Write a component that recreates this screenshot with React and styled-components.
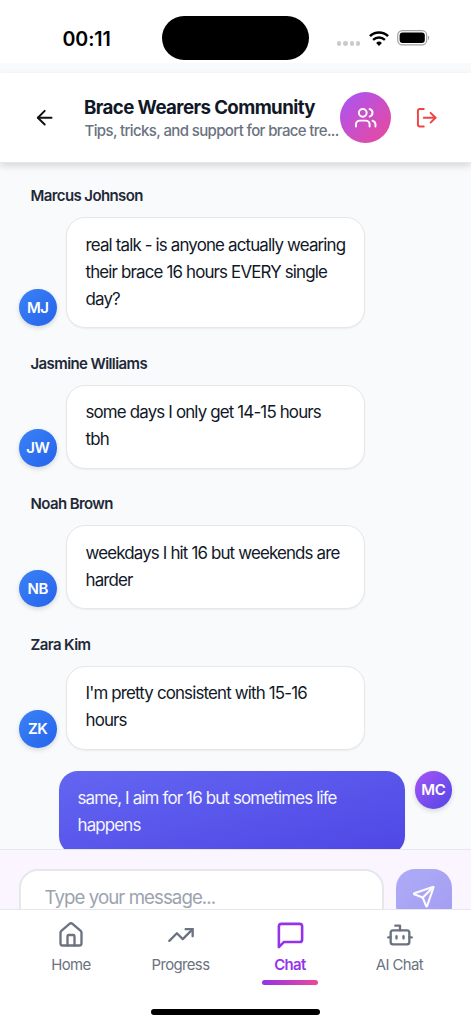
import React from "react";
import styled, { createGlobalStyle } from "styled-components";
import {
  ArrowLeft,
  Bot,
  House,
  LogOut,
  Send,
  TrendingUp,
  Users,
} from "lucide-react";

const messages = [
  {
    id: 1,
    name: "Marcus Johnson",
    initials: "MJ",
    text: "real talk - is anyone actually wearing their brace 16 hours EVERY single day?",
  },
  {
    id: 2,
    name: "Jasmine Williams",
    initials: "JW",
    text: "some days I only get 14-15 hours tbh",
  },
  {
    id: 3,
    name: "Noah Brown",
    initials: "NB",
    text: "weekdays I hit 16 but weekends are harder",
  },
  {
    id: 4,
    name: "Zara Kim",
    initials: "ZK",
    text: "I'm pretty consistent with 15-16 hours",
  },
  {
    id: 5,
    own: true,
    initials: "MC",
    text: "same, I aim for 16 but sometimes life happens",
  },
];

function ChatIcon() {
  return (
    <svg
      width="31"
      height="31"
      viewBox="0 0 24 24"
      fill="none"
      stroke="currentColor"
      strokeWidth="2"
      strokeLinecap="round"
      strokeLinejoin="round"
    >
      <path d="M21 15a2 2 0 0 1-2 2H7l-4 4V5a2 2 0 0 1 2-2h14a2 2 0 0 1 2 2z" />
    </svg>
  );
}

const tabs = [
  { label: "Home", icon: <House size={28} /> },
  { label: "Progress", icon: <TrendingUp size={28} /> },
  { label: "Chat", icon: <ChatIcon />, active: true },
  { label: "AI Chat", icon: <Bot size={28} /> },
];

function PhoneStatus() {
  return (
    <StatusBar>
      <Clock>00:11</Clock>
      <Island />
      <StatusIcons>
        <Dots>
          <Dot />
          <Dot />
          <Dot />
          <Dot />
        </Dots>
        <svg width="20" height="15" viewBox="0 0 20 15" fill="none" stroke="#000">
          <path d="M1 5.1a13 13 0 0 1 18 0" strokeWidth="2.7" />
          <path d="M4.1 8.9a8.5 8.5 0 0 1 11.8 0" strokeWidth="2.4" />
          <path d="M10 14.9 7.1 11.9a4.3 4.3 0 0 1 5.8 0z" fill="#000" stroke="none" />
        </svg>
        <svg width="33" height="16" viewBox="0 0 33 16">
          <rect x="0.7" y="0.7" width="29" height="14.2" rx="4.6" fill="none" stroke="#a3a3a3" strokeWidth="1.2" />
          <rect x="2.6" y="2.6" width="25.2" height="10.4" rx="3" fill="#000" />
          <path d="M31 5.7c1.5.5 1.5 3.7 0 4.2z" fill="#a3a3a3" />
        </svg>
      </StatusIcons>
    </StatusBar>
  );
}

function Message({ message }) {
  const { name, initials, text, own } = message;

  return (
    <Group $own={own}>
      {name && <Name>{name}</Name>}
      <Row $own={own}>
        <Avatar $own={own}>{initials}</Avatar>
        <Bubble $own={own}>{text}</Bubble>
      </Row>
    </Group>
  );
}

function App() {
  return (
    <Screen>
      <GlobalStyle />
      <PhoneStatus />
      <Header>
        <IconButton aria-label="Back">
          <ArrowLeft size={23.4} />
        </IconButton>
        <Titles>
          <Title>Brace Wearers Community</Title>
          <Subtitle>Tips, tricks, and support for brace tre...</Subtitle>
        </Titles>
        <MembersButton aria-label="Members">
          <Users size={23.4} />
        </MembersButton>
        <LeaveButton aria-label="Leave">
          <LogOut size={23.4} />
        </LeaveButton>
      </Header>
      <Feed>
        {messages.map((message) => (
          <Message key={message.id} message={message} />
        ))}
      </Feed>
      <Composer>
        <Input placeholder="Type your message..." />
        <SendButton aria-label="Send">
          <Send size={23.4} />
        </SendButton>
      </Composer>
      <Nav>
        <Tabs>
          {tabs.map((tab) => (
            <Tab key={tab.label} $active={tab.active}>
              <TabIcon>{tab.icon}</TabIcon>
              <TabLabel>{tab.label}</TabLabel>
              {tab.active && <Underline />}
            </Tab>
          ))}
        </Tabs>
        <HomeIndicator />
      </Nav>
    </Screen>
  );
}

const GlobalStyle = createGlobalStyle`
  * {
    box-sizing: border-box;
  }
  body {
    background: #f9fafb;
    font-family: Inter, "Liberation Sans", sans-serif;
    margin: 0;
  }
  button {
    background: none;
    border: none;
    font: inherit;
    padding: 0;
  }
`;

const Screen = styled.div`
  background: #f9fafc;
  display: flex;
  flex-direction: column;
  height: 1024px;
  overflow: hidden;
  width: 471px;
`;

const StatusBar = styled.div`
  background: white;
  display: grid;
  flex: none;
  grid-template-columns: 162px 147px 1fr;
  height: 63px;
  padding-top: 16px;
`;

const Clock = styled.div`
  font-size: 19.6px;
  font-weight: 600;
  letter-spacing: -0.1px;
  line-height: 46px;
  padding-left: 62.5px;
`;

const Island = styled.div`
  background: black;
  border-radius: 22px;
  height: 44px;
`;

const StatusIcons = styled.div`
  align-items: center;
  display: flex;
  gap: 8px;
  height: 44px;
  padding-left: 28px;
`;

const Dots = styled.div`
  display: flex;
  gap: 2px;
  margin: 11px 1px 0 0;
`;

const Dot = styled.span`
  background: #cacaca;
  border-radius: 50%;
  height: 4.3px;
  width: 4.3px;
`;

const Header = styled.header`
  align-items: center;
  background: white;
  border-bottom: 1px solid #e5e7eb;
  box-shadow: 0 3px 7px rgba(0, 0, 0, 0.14);
  display: flex;
  flex: none;
  height: 90px;
  margin-top: 10px;
  padding: 0 19px;
  z-index: 1;
`;

const IconButton = styled.button`
  color: #111;
  display: grid;
  flex: none;
  height: 51px;
  place-items: center;
  width: 51px;
`;

const Titles = styled.div`
  flex: none;
  margin-left: 14px;
  padding-top: 2px;
  width: 255.5px;
`;

const Title = styled.h1`
  color: #111827;
  font-size: 18.7px;
  font-weight: 700;
  letter-spacing: -0.6px;
  line-height: 24px;
  margin: 0;
`;

const Subtitle = styled.p`
  color: #6b7280;
  font-size: 15px;
  font-weight: 500;
  letter-spacing: -0.63px;
  line-height: 22px;
  margin: 0;
  padding-left: 0.5px;
  white-space: nowrap;
`;

const MembersButton = styled(IconButton)`
  background: linear-gradient(135deg, #a855f7, #ec4899);
  border-radius: 50%;
  color: white;
  height: 51.5px;
  width: 51.5px;
`;

const LeaveButton = styled(IconButton)`
  color: #ef4444;
  margin-left: 10px;
`;

const Feed = styled.main`
  display: flex;
  flex: 1;
  flex-direction: column;
  gap: 22.5px;
  min-height: 0;
  overflow: hidden;
  padding: 20px 19px 0;
`;

const Group = styled.section`
  flex: none;
  margin-top: ${({ $own }) => ($own ? "-1px" : 0)};
`;

const Name = styled.div`
  color: #1f2937;
  font-size: 15px;
  font-weight: 600;
  letter-spacing: -0.6px;
  line-height: 26px;
  margin-bottom: 8px;
  padding-left: 11.5px;
`;

const Row = styled.div`
  align-items: ${({ $own }) => ($own ? "flex-start" : "flex-end")};
  display: flex;
  flex-direction: ${({ $own }) => ($own ? "row-reverse" : "row")};
  gap: 9.5px;
`;

const Avatar = styled.div`
  background: ${({ $own }) =>
    $own
      ? "linear-gradient(135deg, #a855f7, #4f46e5)"
      : "linear-gradient(135deg, #3b82f6, #2563eb)"};
  border-radius: 50%;
  box-shadow: 0 2px 5px rgba(0, 0, 0, 0.15);
  color: white;
  flex: none;
  font-size: 15px;
  font-weight: 600;
  height: 37.5px;
  letter-spacing: -0.5px;
  line-height: 37.5px;
  margin-bottom: ${({ $own }) => ($own ? 0 : "2px")};
  text-align: center;
  width: 37.5px;
`;

const Bubble = styled.div`
  background: ${({ $own }) =>
    $own ? "linear-gradient(to bottom right, #6366f1, #4f46e5)" : "white"};
  border: ${({ $own }) => ($own ? "none" : "1px solid #e5e7eb")};
  border-radius: 19px;
  box-shadow: 0 1px 2px rgba(0, 0, 0, 0.06);
  color: ${({ $own }) => ($own ? "#f5f5ff" : "#111827")};
  font-size: 16.9px;
  letter-spacing: -0.84px;
  line-height: 27px;
  padding: ${({ $own }) => ($own ? "13.5px 18px 16.5px 18.5px" : "13.5px 17px 14.5px 18.5px")};
  width: ${({ $own }) => ($own ? "346px" : "299px")};
`;

const Composer = styled.div`
  background: #faf5ff;
  border-top: 1px solid #e5e7eb;
  display: flex;
  flex: none;
  gap: 12px;
  height: 60px;
  overflow: hidden;
  padding: 19px 19px 0;
`;

const Input = styled.input`
  background: white;
  border: 2.4px solid #e5e7eb;
  border-radius: 19px;
  flex: 1;
  font-family: inherit;
  font-size: 18.7px;
  height: 57px;
  letter-spacing: -0.95px;
  min-width: 0;
  padding: 0 23.5px;
  &::placeholder {
    color: #9ca3af;
  }
`;

const SendButton = styled.button`
  background: linear-gradient(135deg, #6366f1, #4f46e5);
  border-radius: 19px;
  color: white;
  display: grid;
  flex: none;
  height: 56px;
  opacity: 0.5;
  place-items: center;
  width: 56px;
  svg {
    stroke-width: 2.2;
  }
`;

const Nav = styled.nav`
  align-items: center;
  background: white;
  border-top: 1px solid #e5e7eb;
  display: flex;
  flex: none;
  flex-direction: column;
  height: 115px;
  justify-content: space-between;
  padding-bottom: 9.5px;
`;

const Tabs = styled.div`
  display: grid;
  grid-template-columns: repeat(4, 109.5px);
`;

const Tab = styled.div`
  align-items: center;
  color: ${({ $active }) => ($active ? "#9333ea" : "#6b7280")};
  display: flex;
  flex-direction: column;
  font-weight: ${({ $active }) => ($active ? 600 : 400)};
  padding-top: 9px;
`;

const TabIcon = styled.div`
  display: grid;
  height: 32px;
  place-items: center;
`;

const TabLabel = styled.span`
  font-size: 14.9px;
  letter-spacing: -0.6px;
  line-height: 24px;
  margin: 1.5px 0.6px 0 0;
`;

const Underline = styled.span`
  background: linear-gradient(90deg, #9333ea, #ec4899);
  border-radius: 3px;
  height: 5px;
  margin-top: 3px;
  width: 56px;
`;

const HomeIndicator = styled.div`
  background: black;
  border-radius: 3px;
  height: 6px;
  width: 169px;
`;

export default App;
